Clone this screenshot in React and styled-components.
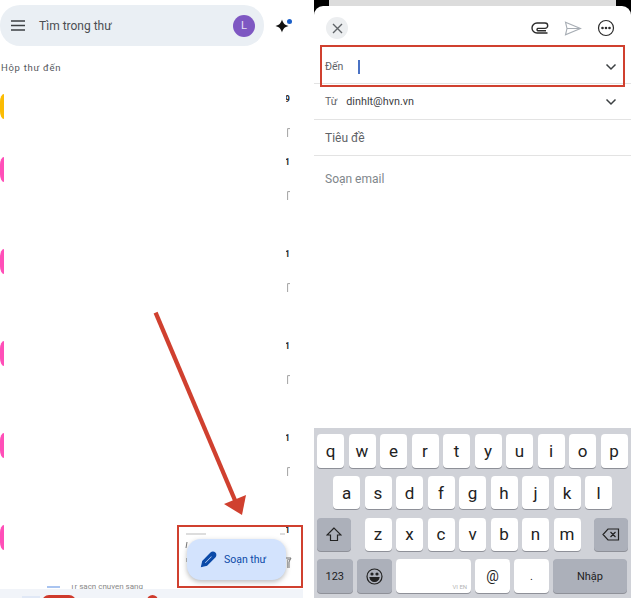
import React from "react";
import styled, { createGlobalStyle } from "styled-components";

const Global = createGlobalStyle`
  html, body { margin: 0; padding: 0; background: #fff; }
  body { width: 642px; height: 598px; overflow: hidden; font-family: "Liberation Sans", Arial, sans-serif; }
`;

const Page = styled.div`
  position: relative;
  display: flex;
  width: 642px;
  height: 598px;
  overflow: hidden;
  background: #fff;
`;

/* ---------- Left phone ---------- */
const Inbox = styled.section`
  position: relative;
  display: flex;
  flex-direction: column;
  width: 303px;
  height: 598px;
  margin-right: 11px;
  overflow: hidden;
`;
const SearchRow = styled.div`
  display: flex;
  align-items: center;
  height: 41px;
  margin-top: 5px;
`;
const SearchBar = styled.div`
  display: flex;
  align-items: center;
  width: 264px;
  height: 41px;
  padding: 0 9px 0 11px;
  box-sizing: border-box;
  background: #eaeff4;
  border-radius: 20px;
`;
const SearchText = styled.span`
  flex: 1;
  margin-left: 14px;
  font: 12px "Roboto", sans-serif;
  color: #4b4e52;
`;
const Avatar = styled.div`
  display: flex;
  align-items: center;
  justify-content: center;
  width: 22px;
  height: 22px;
  border-radius: 50%;
  background: #7e57c2;
  color: #e8e0f5;
  font: 11px "Roboto", sans-serif;
`;
const Spark = styled.div`
  position: relative;
  width: 16px;
  height: 16px;
  margin-left: 10px;
`;
const SparkDot = styled.span`
  position: absolute;
  top: 1px;
  right: -2px;
  width: 5px;
  height: 5px;
  border-radius: 50%;
  background: #1a5fc8;
`;
const Heading = styled.div`
  margin: 16px 0 0 1px;
  height: 32px;
  font: 9.5px "Roboto", sans-serif;
  letter-spacing: 0.7px;
  color: #55585c;
`;
const Row = styled.div`
  display: flex;
  justify-content: space-between;
  height: ${(p) => p.$height}px;
  padding-right: 13px;
  box-sizing: border-box;
`;
const Tab = styled.span`
  width: 4px;
  height: 25px;
  border-radius: 4px 0 0 4px / 8px 0 0 8px;
  background: ${(p) => p.$color};
`;
const Marks = styled.div`
  display: flex;
  flex-direction: column;
  align-items: flex-end;
  width: 4px;
`;
const Digit = styled.span`
  display: block;
  width: 4px;
  height: 10px;
  overflow: hidden;
  direction: rtl;
  font: bold 8.5px/10px "Roboto", sans-serif;
  color: #222;
`;
const Star = styled.svg`
  display: block;
  width: 3px;
  height: 10px;
  margin-top: 24px;
`;
const Hidden = styled.div`
  display: flex;
  align-items: flex-end;
  height: 4px;
  overflow: hidden;
  padding-left: 47px;
  gap: 10px;
  font: 8px/5px "Roboto", sans-serif;
  color: #888;
`;
const Chip = styled.span`
  flex: 0 0 13px;
  height: 2px;
  margin-bottom: 1px;
  background: #a9c4f0;
`;
const BottomNav = styled.nav`
  position: relative;
  flex: 1;
  background: #f1f4f9;
  overflow: hidden;
`;
const NavGlow = styled.span`
  position: absolute;
  top: 7px;
  left: 22px;
  width: 18px;
  height: 6px;
  background: #e0e8f6;
`;
const NavPill = styled.span`
  position: absolute;
  top: 6px;
  left: 42px;
  width: 34px;
  height: 14px;
  border-radius: 7px;
  background: #cf3a2c;
`;
const NavDot = styled.span`
  position: absolute;
  top: 6px;
  left: 147px;
  width: 11px;
  height: 11px;
  border-radius: 50%;
  background: #cf3a2c;
`;
const Highlight = styled.div`
  position: absolute;
  box-sizing: border-box;
  border: 2px solid #d0402f;
  left: ${(p) => p.$x}px;
  top: ${(p) => p.$y}px;
  width: ${(p) => p.$w}px;
  height: ${(p) => p.$h}px;
  pointer-events: none;
`;
const Residue = styled.svg`
  position: absolute;
  left: 180px;
  top: 528px;
  width: 114px;
  height: 44px;
`;
const Fab = styled.button`
  position: absolute;
  left: 187px;
  top: 539px;
  display: flex;
  align-items: center;
  gap: 7px;
  width: 99px;
  height: 41px;
  padding: 0 0 0 13px;
  box-sizing: border-box;
  border: 0;
  border-radius: 14px;
  background: #d3e3fd;
  box-shadow: 0 2px 5px rgba(60, 64, 67, 0.35);
  font: 10.5px "Roboto", sans-serif;
  color: #0b4aa8;
`;
const Arrow = styled.svg`
  position: absolute;
  left: 150px;
  top: 308px;
  width: 100px;
  height: 212px;
`;

/* ---------- Right phone ---------- */
const Compose = styled.section`
  position: relative;
  display: flex;
  flex-direction: column;
  width: 317px;
  height: 598px;
  background: #000;
`;
const BackSheet = styled.div`
  height: 6px;
  margin: 0 15px;
  background: #dcdcdc;
`;
const Sheet = styled.div`
  flex: 1;
  display: flex;
  flex-direction: column;
  background: #fff;
  border-radius: 9px 9px 0 0;
`;
const Toolbar = styled.div`
  display: flex;
  align-items: center;
  height: 44px;
  padding: 0 16px 0 12px;
  box-sizing: border-box;
`;
const Close = styled.div`
  display: flex;
  align-items: center;
  justify-content: center;
  width: 22px;
  height: 22px;
  border-radius: 50%;
  background: #eceef0;
`;
const ToolIcons = styled.div`
  display: flex;
  align-items: center;
  margin-left: auto;
  gap: 15px;
`;
const Field = styled.div`
  display: flex;
  align-items: center;
  height: ${(p) => p.$h}px;
  padding: 0 14px 0 11px;
  box-sizing: border-box;
  border-bottom: 1px solid #e3e3e3;
`;
const Label = styled.span`
  font: ${(p) => p.$size || 11}px "Roboto", sans-serif;
  color: ${(p) => p.$color || "#5f6368"};
`;
const Value = styled.span`
  margin-left: 9px;
  font: 10.8px "Roboto", sans-serif;
  color: #3c4043;
`;
const Caret = styled.span`
  width: 1.5px;
  height: 14px;
  margin-left: 15px;
  background: #4a72c4;
`;
const Chevron = styled.svg`
  margin-left: auto;
  width: 12px;
  height: 8px;
`;
const Body = styled.div`
  flex: 1;
  padding: 13px 11px;
`;
const Keyboard = styled.div`
  display: flex;
  flex-direction: column;
  gap: 8.3px;
  height: 170px;
  padding: 6px 3px 0;
  box-sizing: border-box;
  background: #d0d2d8;
`;
const KeyRow = styled.div`
  display: flex;
  justify-content: ${(p) => p.$justify || "flex-start"};
  gap: ${(p) => p.$gap ?? 4.5}px;
  padding: 0 ${(p) => p.$pad || 0}px;
`;
const Key = styled.div`
  display: flex;
  align-items: center;
  justify-content: center;
  flex: ${(p) => (p.$w ? `0 0 ${p.$w}px` : "0 0 27px")};
  height: 33.5px;
  border-radius: 4px;
  background: ${(p) => (p.$dark ? "#acb0ba" : "#fff")};
  box-shadow: 0 1px 0 #8e9098;
  font: ${(p) => p.$size || 17}px "Roboto", sans-serif;
  color: #222;
  position: relative;
`;
const SpaceTag = styled.span`
  position: absolute;
  right: 4px;
  bottom: 3px;
  font: 6px "Roboto", sans-serif;
  color: #b5b5b5;
`;

const tabs = [
  ["#fbbc04", 63, "9"],
  ["#ff4fb8", 92, "1"],
  ["#ff4fb8", 92, "1"],
  ["#ff4fb8", 92, "1"],
  ["#ff4fb8", 92, "1"],
  ["#ff4fb8", 60, "1"],
];

const Letters = ({ list }) => list.split("").map((c) => <Key key={c}>{c}</Key>);

const ChevronDown = () => (
  <Chevron viewBox="0 0 12 8" fill="none" stroke="#3c4043" strokeWidth="1.5">
    <path d="M1.5 1.5 6 6l4.5-4.5" />
  </Chevron>
);

export default function App() {
  return (
    <Page>
      <Global />
      <Inbox>
        <SearchRow>
          <SearchBar>
            <svg width="14" height="11" viewBox="0 0 14 11" stroke="#3c4043" strokeWidth="1.4">
              <path d="M0 1h14M0 5.5h14M0 10h14" />
            </svg>
            <SearchText>Tìm trong thư</SearchText>
            <Avatar>L</Avatar>
          </SearchBar>
          <Spark>
            <svg width="16" height="16" viewBox="0 0 16 16">
              <path d="M8 1.500c1 3.500 2.500 5.500 6.500 6.500-4 1-5.500 3-6.500 6.500-1-3.500-2.500-5.500-6.500-6.500 4-1 5.500-3 6.500-6.500z" fill="#111" />
            </svg>
            <SparkDot />
          </Spark>
        </SearchRow>
        <Heading>Hộp thư đến</Heading>
        {tabs.map(([color, h, d], i) => (
          <Row key={i} $height={h}>
            <Tab $color={color} />
            <Marks>
              <Digit>{d}</Digit>
              <Star viewBox="0 0 3 10" fill="none" stroke="#8a8a8a" strokeWidth="0.8">
                <path d="M3 .6H.6V9" />
              </Star>
            </Marks>
          </Row>
        ))}
        <Hidden>
          <Chip />
          <span>Tr sách chuyển sang</span>
        </Hidden>
        <BottomNav>
          <NavGlow />
          <NavPill />
          <NavDot />
        </BottomNav>
        <Highlight $x={177} $y={525} $w={126} $h={63} />
        <Residue viewBox="0 0 114 44" fill="none" stroke="#777" strokeWidth="1">
          <path d="M6 6h20M100 6h5" stroke="#bbb" />
          <path d="M7 14l-1 6M7 30v4" />
          <path d="M104 30h7l-2 4v6" />
        </Residue>
        <Fab>
          <svg width="17" height="17" viewBox="0 0 24 24" fill="#0b4aa8" stroke="#0b4aa8" strokeWidth="2">
            <path fillRule="evenodd" d="M2.500 21.500l1.500-7L15.500 3a3.200 3.200 0 0 1 5.500 5.500L9.500 20zM6.500 15.500l-.8 2.800 2.800-.8L18 8l-2-2z" />
          </svg>
          Soạn thư
        </Fab>
        <Arrow viewBox="0 0 100 212" fill="none">
          <path d="M5.600 4.700 L87 197" stroke="#d0402f" strokeWidth="4.300" />
          <path d="M74 196 L96 187 L92 207 Z" fill="#d0402f" />
        </Arrow>
      </Inbox>

      <Compose>
        <BackSheet />
        <Sheet>
          <Toolbar>
            <Close>
              <svg width="11" height="11" viewBox="0 0 11 11" stroke="#606468" strokeWidth="1.4">
                <path d="M1 1l9 9M10 1l-9 9" />
              </svg>
            </Close>
            <ToolIcons>
              <svg width="18" height="12" viewBox="0 0 18 12" fill="none" stroke="#2b2b2b" strokeWidth="1.400">
                <path d="M16.500 11H6A5 5 0 0 1 6 1h8a2.700 2.700 0 0 1 0 5.400H6.800a1.300 1.300 0 0 0 0 2.400H15" />
              </svg>
              <svg width="18" height="15" viewBox="0 0 18 15" fill="none" stroke="#a7adb4" strokeWidth="1.100">
                <path d="M1.500 1.200 16.500 7.500 1.500 13.800l1.500-6.300zM3 7.500h13" />
              </svg>
              <svg width="18" height="18" viewBox="0 0 18 18" fill="none" stroke="#2b2b2b" strokeWidth="1.200">
                <circle cx="9" cy="9" r="7.500" />
                <circle cx="5.500" cy="9" r=".7" fill="#2b2b2b" />
                <circle cx="9" cy="9" r=".7" fill="#2b2b2b" />
                <circle cx="12.500" cy="9" r=".7" fill="#2b2b2b" />
              </svg>
            </ToolIcons>
          </Toolbar>
          <Field $h={34}>
            <Label $size={10.5}>Đến</Label>
            <Caret />
            <ChevronDown />
          </Field>
          <Field $h={36}>
            <Label $size={10.5}>Từ</Label>
            <Value>dinhlt@hvn.vn</Value>
            <ChevronDown />
          </Field>
          <Field $h={36}>
            <Label $size={12}>Tiêu đề</Label>
          </Field>
          <Body>
            <Label $size={12} $color="#80868b">Soạn email</Label>
          </Body>
          <Keyboard>
            <KeyRow>
              <Letters list="qwertyuiop" />
            </KeyRow>
            <KeyRow $pad={16}>
              <Letters list="asdfghjkl" />
            </KeyRow>
            <KeyRow $justify="space-between">
              <Key $dark $w={34}>
                <svg width="16" height="15" viewBox="0 0 16 15" fill="none" stroke="#222" strokeWidth="1.200">
                  <path d="M8 1 1 8h3.500v5.500h7V8H15z" />
                </svg>
              </Key>
              <KeyRow>
                <Letters list="zxcvbnm" />
              </KeyRow>
              <Key $dark $w={34}>
                <svg width="18" height="13" viewBox="0 0 18 13" fill="none" stroke="#222" strokeWidth="1.200">
                  <path d="M6 1h10.500v11H6L1 6.500zM8.500 4l5 5M13.500 4l-5 5" />
                </svg>
              </Key>
            </KeyRow>
            <KeyRow $gap={4.3}>
              <Key $dark $w={35.5} $size={11}>123</Key>
              <Key $dark $w={35}>
                <svg width="17" height="17" viewBox="0 0 17 17" fill="none" stroke="#222" strokeWidth="1.200">
                  <circle cx="8.500" cy="8.500" r="7.500" />
                  <path d="M4 9.500h9c-.5 2.500-2.200 4-4.500 4S4.500 12 4 9.500z" fill="#222" />
                  <circle cx="6" cy="6" r="1" fill="#222" />
                  <circle cx="11" cy="6" r="1" fill="#222" />
                </svg>
              </Key>
              <Key $w={75}><SpaceTag>VI EN</SpaceTag></Key>
              <Key $w={34.5} $size={14}>@</Key>
              <Key $w={34.5} $size={11}>.</Key>
              <Key $dark $w={74} $size={11}>Nhập</Key>
            </KeyRow>
          </Keyboard>
        </Sheet>
        <Highlight $x={6} $y={45} $w={305} $h={42} />
      </Compose>
    </Page>
  );
}
